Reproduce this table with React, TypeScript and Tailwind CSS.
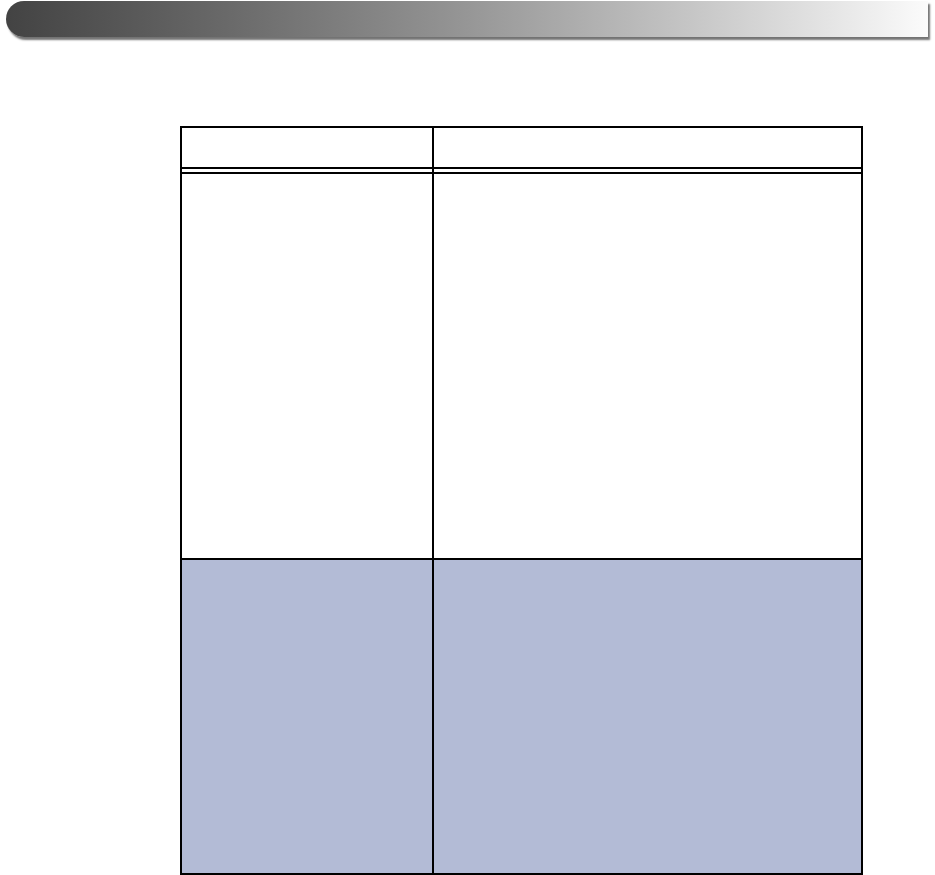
export default function App() {
  return (
    <div className="min-h-[875px] bg-white font-['Liberation_Sans',sans-serif]">
      {/* Title bar */}
      <div className="pl-[6px] pt-px">
        <div className="h-[36px] w-[922px] rounded-l-full bg-gradient-to-r from-[#434343] via-[#969696] to-[#fbfbfb] shadow-[2px_3px_2px_rgba(0,0,0,0.55)]" />
      </div>

      {/* Table */}
      <div className="pl-[180px] pt-[89px]">
        <div className="w-[683px] border-2 border-black">
          <div className="grid h-[39px] grid-cols-[252px_1fr]">
            <div className="border-r-2 border-black" />
            <div />
          </div>
          <div className="h-[2px] bg-black" />
          <div className="grid h-[3px] grid-cols-[252px_1fr]">
            <div className="border-r-2 border-black" />
            <div />
          </div>
          <div className="h-[2px] bg-black" />
          <div className="grid h-[384px] grid-cols-[252px_1fr]">
            <div className="border-r-2 border-black" />
            <div />
          </div>
          <div className="h-[2px] bg-black" />
          <div className="grid h-[313px] grid-cols-[252px_1fr] bg-[#b3bbd6]">
            <div className="border-r-2 border-black" />
            <div />
          </div>
        </div>
      </div>
    </div>
  );
}
